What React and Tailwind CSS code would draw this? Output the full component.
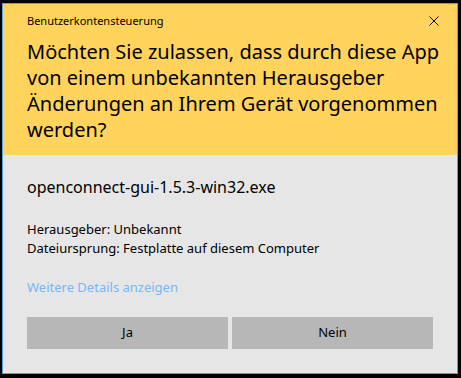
export default function App() {
  return (
    <div className="h-[378px] w-[461px] overflow-hidden bg-black pl-[2px] pt-[3px]" style={{ fontFamily: '"Noto Sans", sans-serif' }}>
      <div className="flex h-[371px] w-[456px] flex-col border border-[#5aa0e6] bg-[#e6e6e6] text-black">
        <header className="h-[151px] bg-[#ffd35c] px-[24px] pt-[9px]">
          <div className="flex items-start justify-between">
            <p className="text-[11px] leading-[16px]">Benutzerkontensteuerung</p>
            <button className="mr-[-6px] mt-[3px] flex h-[10px] w-[10px] items-center justify-center">
              <svg width="10" height="10" viewBox="0 0 10 10">
                <path d="M0.5 0.5 L9.5 9.5 M9.5 0.5 L0.5 9.5" stroke="#000" strokeWidth="1" fill="none" />
              </svg>
            </button>
          </div>
          <h1 className="mt-[10px] whitespace-nowrap text-[20px] leading-[26px]">
            Möchten Sie zulassen, dass durch diese App<br />
            von einem unbekannten Herausgeber<br />
            Änderungen an Ihrem Gerät vorgenommen<br />
            werden?
          </h1>
        </header>

        <section className="flex flex-1 flex-col px-[24px] pt-[21px]">
          <p className="text-[16px] leading-[22px]">openconnect-gui-1.5.3-win32.exe</p>
          <dl className="mt-[22px] text-[13px] leading-[19px]">
            <div>Herausgeber: Unbekannt</div>
            <div>Dateiursprung: Festplatte auf diesem Computer</div>
          </dl>
          <a className="mt-[20px] text-[13px] leading-[19px] text-[#76b6f5]">Weitere Details anzeigen</a>
          <div className="mt-[20px] grid grid-cols-2 gap-[4px]">
            <button className="h-[32px] bg-[#b7b7b7] text-[13px]">Ja</button>
            <button className="h-[32px] bg-[#b7b7b7] text-[13px]">Nein</button>
          </div>
        </section>
      </div>
    </div>
  )
}
